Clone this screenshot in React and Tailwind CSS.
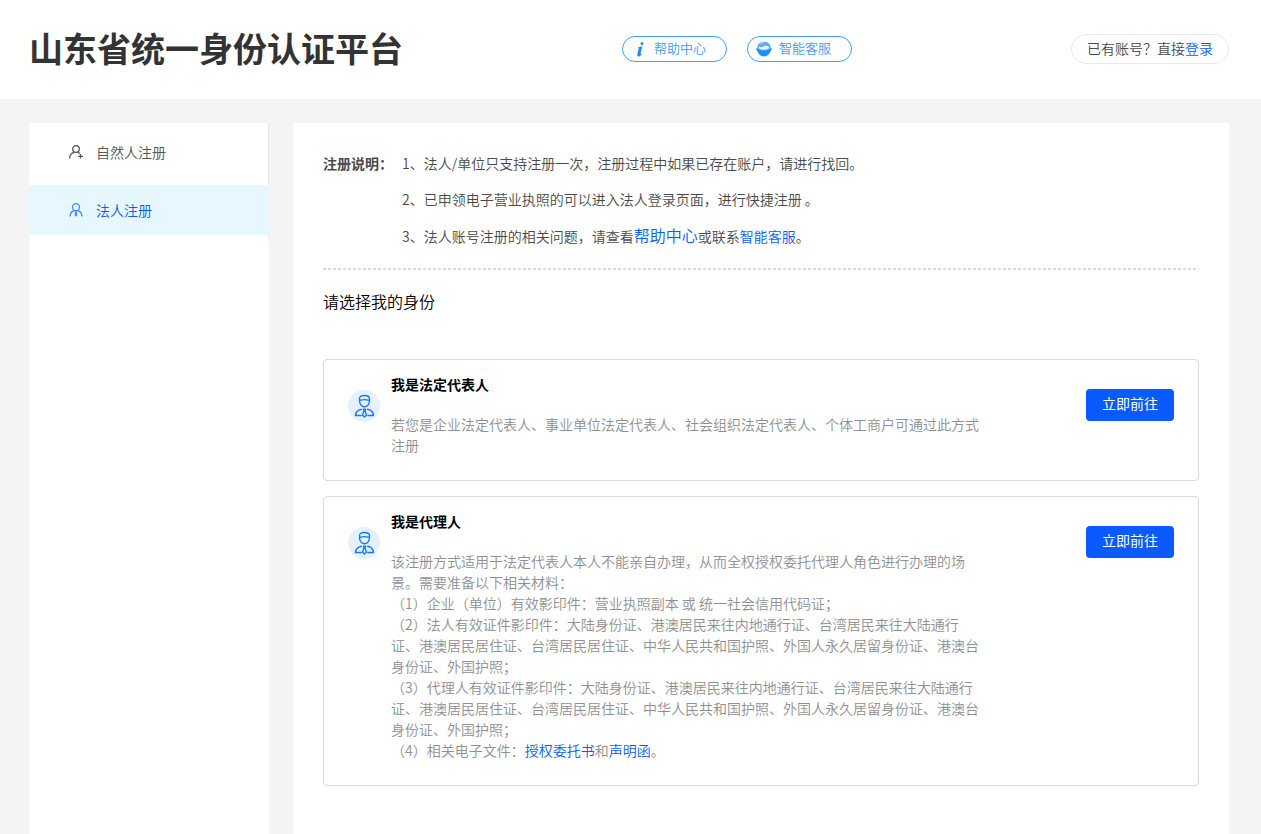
import clsx from "clsx";

const AGENT_MATERIALS = [
  "（1）企业（单位）有效影印件：营业执照副本 或 统一社会信用代码证；",
  "（2）法人有效证件影印件：大陆身份证、港澳居民来往内地通行证、台湾居民来往大陆通行证、港澳居民居住证、台湾居民居住证、中华人民共和国护照、外国人永久居留身份证、港澳台身份证、外国护照；",
  "（3）代理人有效证件影印件：大陆身份证、港澳居民来往内地通行证、台湾居民来往大陆通行证、港澳居民居住证、台湾居民居住证、中华人民共和国护照、外国人永久居留身份证、港澳台身份证、外国护照；",
];

function InfoIcon() {
  return (
    <svg width="16" height="16" viewBox="-5 0 16 16" fill="#1890ff" aria-hidden="true">
      <circle cx="6" cy="2.5" r="1.5" />
      <path d="M2.200 6.200 6.300 5.300 4.600 12.600c-.2.9.3 1 1.700-.5-.8 2.200-2 3.400-3.500 3.400-1.400 0-1.800-.9-1.500-2.200L2.700 7.400c.1-.5 0-.6-.8-.5z" />
    </svg>
  );
}

function RobotIcon() {
  return (
    <svg width="16" height="16" viewBox="0 0 16 16" aria-hidden="true">
      <path d="M1.500 6C1.500 2.800 4.300.8 8 .8S14.500 2.800 14.500 6l1 2-2 2h-11l-2-2z" fill="#5aaef8" />
      <path d="M3.200 5.600c1.600 1.200 3.100.4 4.700-.3 1.700-.8 3.500-.5 5 .5.5.8.300 1.500-.6 2-2.500 1.200-6.200 1.200-8.600.1-.9-.5-1.100-1.500-.5-2.300z" fill="#e4f3ff" />
      <path d="M3.800 3c1.100-1 2.600-1.500 4.200-1.500" fill="none" stroke="#d7ecff" />
      <path d="M.3 7.300C2.200 9 4.900 9.600 8 9.600s5.800-.6 7.700-2.300c.2 1.300-.3 2.300-1.300 2.900-.8 3-3.300 5.200-6.400 5.200s-5.600-2.200-6.400-5.200C.6 9.600.1 8.600.3 7.300z" fill="#1890ff" />
    </svg>
  );
}

function UserAddIcon() {
  return (
    <svg width="14" height="14" viewBox="0 0 14 14" fill="none" stroke="currentColor" strokeWidth="1.300" aria-hidden="true">
      <circle cx="7" cy="4" r="3.300" />
      <path d="M.7 13.500c0-3.500 2.100-5.700 4.600-6.200M8.700 7.300c.8.2 1.500.6 2.100 1.200M11.500 9v4.600M9.200 11.300H14" />
    </svg>
  );
}

function LegalPersonIcon() {
  return (
    <svg width="14" height="14" viewBox="0 0 14 14" fill="none" stroke="currentColor" strokeWidth="1.300" aria-hidden="true" className="text-[#3d86ff]">
      <circle cx="7" cy="4.200" r="3.500" />
      <path d="M1 13.600c0-3.200 1.500-5 3.800-6M13 13.600c0-3.200-1.500-5-3.800-6" />
      <path d="M6.300 8.300h1.400L8 12.500l-1 1-1-1z" fill="currentColor" strokeWidth=".4" />
    </svg>
  );
}

function AvatarIcon() {
  return (
    <span className="mt-[30px] flex size-8 shrink-0 items-center justify-center rounded-full bg-[#e6f1ff]">
      <svg width="20" height="24" viewBox="0 0 20 24" fill="none" stroke="#1677ff" strokeWidth="1.400" strokeLinejoin="round" aria-hidden="true">
        <path d="M5.500 6.500V4.700c0-2.200 1.700-3.200 5-3.200s5 1 5 3.200v1.800c0 3.300-2 6.300-5 6.300s-5-3-5-6.300z" />
        <path d="M5.500 6.300c2 .1 3.500-.7 5-.7s3 .8 5 .7" />
        <path d="M8 15.200c-3.800.5-6.200 2.700-6.600 6.300h6.300M13 15.200c3.800.5 6.200 2.700 6.600 6.300h-6.300" />
        <path d="M9.500 15.300h2l-.4 1.900 1.400 3.800-2 2-2-2 1.400-3.800z" />
      </svg>
    </span>
  );
}

function ServicePill({ icon, children }) {
  return (
    <button
      type="button"
      className="flex h-[26px] w-[105px] items-center gap-[7px] rounded-full border border-[#3da0ff] pl-2 text-[13px] text-[#3d9bff]"
    >
      {icon}
      {children}
    </button>
  );
}

function MenuItem({ icon, active, children }) {
  return (
    <li>
      <a
        href="#"
        aria-current={active ? "page" : undefined}
        className={clsx(
          "flex h-[50px] items-center gap-[13px] pb-px pl-10",
          active ? "-mr-px bg-[#e6f7ff] text-[#0a5bff]" : "text-[#555]"
        )}
      >
        {icon}
        {children}
      </a>
    </li>
  );
}

function Link({ className, children }) {
  return (
    <a href="#" className={clsx("text-[#0a5bff]", className)}>
      {children}
    </a>
  );
}

function IdentityCard({ title, children }) {
  return (
    <section className="flex items-start rounded border border-[#d9d9d9] px-6 pb-6">
      <AvatarIcon />
      <div className="ml-[11px] mt-[14px] max-w-[592px] flex-1">
        <h3 className="font-bold leading-[21px] text-black">{title}</h3>
        <div className="mt-[19px] leading-[21px] text-[#909090]">{children}</div>
      </div>
      <button
        type="button"
        className="ml-auto mt-[29px] h-8 w-[88px] shrink-0 rounded bg-[#0a5bff] pb-1 font-normal text-white"
      >
        立即前往
      </button>
    </section>
  );
}

export default function App() {
  return (
    <div
      lang="zh-CN"
      className="flex min-h-screen flex-col bg-[#f4f4f4] font-['Noto_Sans_CJK_SC',sans-serif] text-sm font-[350] text-[#4a4a4a]"
    >
      <header className="flex h-[99px] items-center justify-between bg-white pb-0.5 pl-[29px] pr-8">
        <h1 className="text-[34px] font-bold text-[#333]">山东省统一身份认证平台</h1>
        <div className="flex gap-5">
          <ServicePill icon={<InfoIcon />}>帮助中心</ServicePill>
          <ServicePill icon={<RobotIcon />}>智能客服</ServicePill>
        </div>
        <p className="flex h-[30px] items-center rounded-full border border-[#e8e8e8] px-[15px] pb-0.5">
          已有账号？直接<Link>登录</Link>
        </p>
      </header>

      <div className="flex flex-1 gap-6 pl-[29px] pr-8 pt-6">
        <nav className="w-60 shrink-0 bg-white">
          <ul className="flex flex-col gap-2 border-r border-[#e8e8e8] py-1">
            <MenuItem icon={<UserAddIcon />}>自然人注册</MenuItem>
            <MenuItem icon={<LegalPersonIcon />} active>
              法人注册
            </MenuItem>
          </ul>
        </nav>

        <main className="flex-1 bg-white px-[30px] pb-12 pt-[22px]">
          <div className="flex leading-9">
            <strong className="w-[79px] shrink-0 font-bold">注册说明：</strong>
            <ol>
              <li>1、法人/单位只支持注册一次，注册过程中如果已存在账户，请进行找回。</li>
              <li>2、已申领电子营业执照的可以进入法人登录页面，进行快捷注册 。</li>
              <li>
                3、法人账号注册的相关问题，请查看<Link className="text-base leading-9">帮助中心</Link>或联系
                <Link>智能客服</Link>。
              </li>
            </ol>
          </div>
          <hr className="mt-[14px] h-0.5 border-0 bg-[repeating-linear-gradient(90deg,#d9d9d9_0_3px,transparent_3px_5px)]" />

          <h2 className="mb-[46px] mt-[19px] text-base font-[350] text-black">请选择我的身份</h2>

          <div className="flex flex-col gap-[15px]">
            <IdentityCard title="我是法定代表人">
              <p>若您是企业法定代表人、事业单位法定代表人、社会组织法定代表人、个体工商户可通过此方式注册</p>
            </IdentityCard>
            <IdentityCard title="我是代理人">
              <p>该注册方式适用于法定代表人本人不能亲自办理，从而全权授权委托代理人角色进行办理的场景。需要准备以下相关材料：</p>
              {AGENT_MATERIALS.map((text) => (
                <p key={text}>{text}</p>
              ))}
              <p>
                （4）相关电子文件：<Link>授权委托书</Link>和<Link>声明函</Link>。
              </p>
            </IdentityCard>
          </div>
        </main>
      </div>
    </div>
  );
}
